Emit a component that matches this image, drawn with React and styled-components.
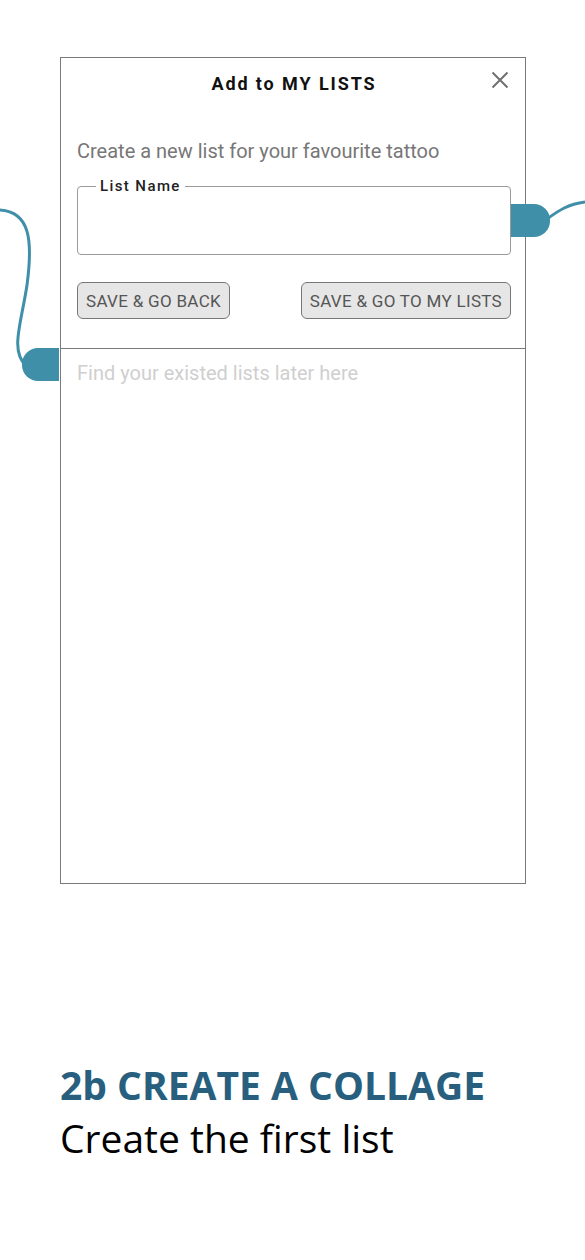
import React from 'react';
import styled, { createGlobalStyle } from 'styled-components';

const GlobalStyle = createGlobalStyle`
	html, body {
		margin: 0;
		padding: 0;
		background: #fff;
	}
`;

export default function App() {
	return (
		<Page>
			<GlobalStyle />
			<Connectors width="585" height="420" viewBox="0 0 585 420">
				<path d="M0 210 C 30 212, 33 240, 27 285 C 21 325, 10 350, 26 366" fill="none" stroke="#3f8fa9" strokeWidth="3" />
				<path d="M59 348 H38 A16 16 0 0 0 22 364 V365 A16 16 0 0 0 38 381 H59 Z" fill="#3f8fa9" />
				<path d="M547 219 C 558 211, 568 204, 585 202" fill="none" stroke="#3f8fa9" strokeWidth="3" />
				<path d="M511 204 H534 A16 16 0 0 1 550 220 V221 A16 16 0 0 1 534 237 H511 Z" fill="#3f8fa9" />
			</Connectors>
			<Dialog>
				<TopSection>
					<Header>
						<Title>Add to MY LISTS</Title>
						<CloseButton aria-label="close">
							<svg width="18" height="18" viewBox="0 0 18 18">
								<path d="M1.5 1.5 L16.5 16.5 M16.5 1.5 L1.5 16.5" stroke="#707070" strokeWidth="2" />
							</svg>
						</CloseButton>
					</Header>
					<Description>Create a new list for your favourite tattoo</Description>
					<Field>
						<Legend>List Name</Legend>
						<Input type="text" />
					</Field>
					<ButtonRow>
						<Button>SAVE &amp; GO BACK</Button>
						<Button>SAVE &amp; GO TO MY LISTS</Button>
					</ButtonRow>
				</TopSection>
				<ListArea>
					<Placeholder>Find your existed lists later here</Placeholder>
				</ListArea>
			</Dialog>
			<Caption>
				<Heading>2b CREATE A COLLAGE</Heading>
				<Subheading>Create the first list</Subheading>
			</Caption>
		</Page>
	);
}

const Page = styled.div`
	position: relative;
	width: 585px;
	min-height: 1260px;
	padding-top: 57px;
	box-sizing: border-box;
	overflow: hidden;
`;

const Connectors = styled.svg`
	position: absolute;
	top: 0;
	left: 0;
	z-index: 2;
	pointer-events: none;
`;

const Dialog = styled.div`
	margin-left: 60px;
	width: 466px;
	height: 827px;
	box-sizing: border-box;
	border: 1px solid #7a7a7a;
	display: flex;
	flex-direction: column;
	font-family: Roboto, "Liberation Sans", sans-serif;
`;

const TopSection = styled.div`
	padding: 0 14px 29px 16px;
	border-bottom: 1px solid #7a7a7a;
	display: flex;
	flex-direction: column;
`;

const Header = styled.div`
	position: relative;
	height: 50px;
	display: flex;
	align-items: center;
	justify-content: center;
`;

const Title = styled.h2`
	margin: 0;
	padding-top: 1px;
	font-size: 18px;
	font-weight: 700;
	letter-spacing: 1.9px;
	color: #111;
`;

const CloseButton = styled.button`
	position: absolute;
	right: 2px;
	top: 13px;
	padding: 0;
	border: none;
	background: none;
	width: 18px;
	height: 18px;
	display: flex;
`;

const Description = styled.p`
	margin: 31px 0 0;
	font-size: 20px;
	line-height: 24px;
	color: #777;
`;

const Field = styled.fieldset`
	margin: 14px 0 0;
	padding: 0 10px 0 18px;
	height: 78px;
	box-sizing: border-box;
	border: 1px solid #9a9a9a;
	border-radius: 4px;
`;

const Legend = styled.legend`
	padding: 0 4px;
	font-size: 15px;
	font-weight: 500;
	letter-spacing: 1.4px;
	color: #222;
`;

const Input = styled.input`
	width: 100%;
	height: 40px;
	border: none;
	outline: none;
	background: transparent;
	font-family: inherit;
	font-size: 18px;
`;

const ButtonRow = styled.div`
	margin-top: 27px;
	display: flex;
	justify-content: space-between;
`;

const Button = styled.button`
	height: 37px;
	padding: 0 8px;
	border: 1px solid #777;
	border-radius: 6px;
	background: #e6e6e6;
	font-family: Roboto, "Liberation Sans", sans-serif;
	font-size: 17px;
	letter-spacing: 0.3px;
	color: #555;
`;

const ListArea = styled.div`
	flex: 1;
	padding: 12px 16px;
`;

const Placeholder = styled.p`
	margin: 0;
	font-size: 20px;
	line-height: 24px;
	color: #cfcfcf;
`;

const Caption = styled.div`
	margin-top: 174px;
	padding-left: 60px;
	font-family: "Open Sans", "Liberation Sans", sans-serif;
`;

const Heading = styled.h1`
	margin: 0;
	font-size: 39px;
	line-height: 53px;
	font-weight: 700;
	color: #285f7e;
`;

const Subheading = styled.p`
	margin: 0;
	font-size: 39px;
	line-height: 53px;
	font-weight: 400;
	color: #000;
`;
